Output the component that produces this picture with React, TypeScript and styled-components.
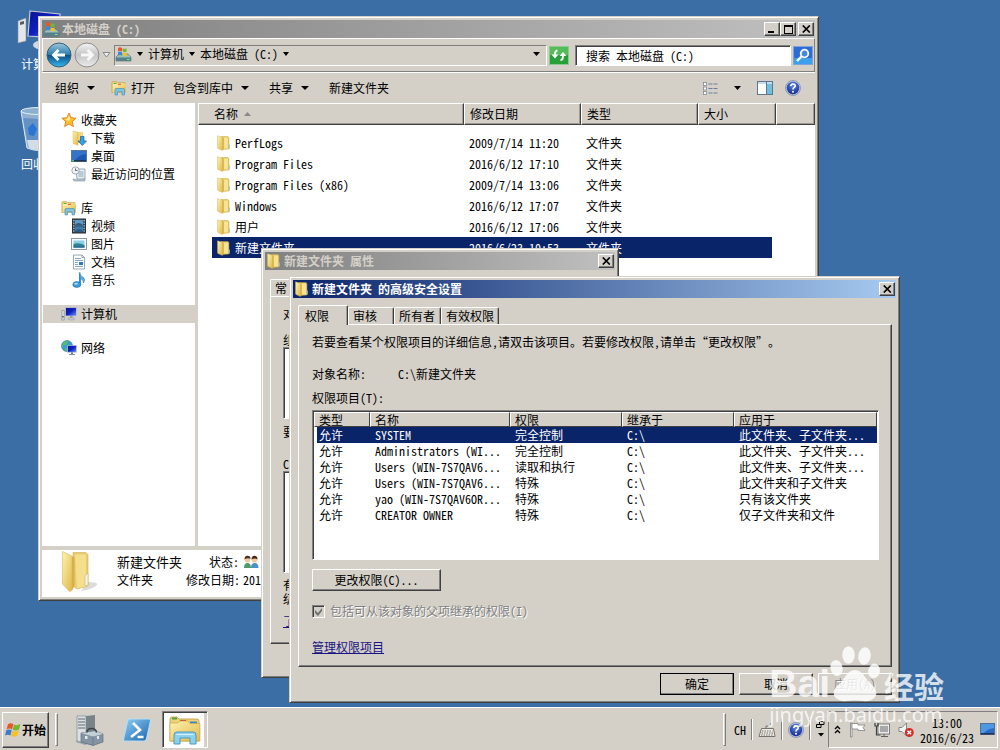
import React from 'react';
import styled, { createGlobalStyle, css } from 'styled-components';

const face = '#d4d0c8';
const navy = '#0a246a';

const GlobalStyle = createGlobalStyle`
  * { box-sizing: border-box; }
  html, body, #root { height: 100%; }
  body {
    margin: 0;
    overflow: hidden;
    background: #3a6ea5;
    color: #000;
  }
  body, button, input {
    font-family: 'Noto Sans CJK SC', 'Liberation Sans', sans-serif;
    font-size: 12px;
    line-height: 16px;
    font-feature-settings: 'hwid';
  }
  button { color: inherit; padding: 0; border: 0; background: none; text-align: left; white-space: nowrap; }
  p, h1, h2, ul { margin: 0; padding: 0; font-weight: normal; list-style: none; }
  svg { display: block; flex: none; }
`;

const raised = css`
  background: ${face};
  border: 1px solid;
  border-color: #fff #404040 #404040 #fff;
  box-shadow: inset -1px -1px #808080;
`;

const sunken = css`
  border: 1px solid;
  border-color: #808080 #fff #fff #808080;
  box-shadow: inset 1px 1px #404040;
`;

const Screen = styled.div`
  display: flex;
  flex-direction: column;
  height: 100vh;
  min-height: 100%;
`;

const Desktop = styled.main`
  position: relative;
  flex: 1;
  overflow: hidden;
`;

/* ---------- windows ---------- */

const Window = styled.section<{ $x: number; $y: number; $w: number; $h: number }>`
  position: absolute;
  left: ${p => p.$x}px;
  top: ${p => p.$y}px;
  width: ${p => p.$w}px;
  height: ${p => p.$h}px;
  display: flex;
  flex-direction: column;
  padding: 3px;
  background: ${face};
  border: 1px solid;
  border-color: ${face} #404040 #404040 ${face};
  box-shadow: inset 1px 1px #fff, inset -1px -1px #808080;
`;

const TitleBar = styled.header<{ $active?: boolean }>`
  display: flex;
  align-items: center;
  gap: 2px;
  height: 18px;
  flex: none;
  padding: 0 1px;
  color: ${p => (p.$active ? '#fff' : face)};
  background: ${p => (p.$active ? `linear-gradient(90deg, ${navy}, #a6caf0)` : 'linear-gradient(90deg, #808080, #c0c0c0)')};
`;

const TitleText = styled.h1`
  flex: 1;
  font-size: 12px;
  line-height: 16px;
  font-weight: bold;
  white-space: nowrap;
`;

const CaptionButton = styled.button`
  ${raised}
  display: flex;
  align-items: center;
  justify-content: center;
  width: 16px;
  height: 14px;
  color: #000;
`;

const CaptionGroup = styled.div`
  display: flex;
`;

/* ---------- desktop shortcuts ---------- */

const Shortcut = styled.button<{ $y: number }>`
  position: absolute;
  left: 14px;
  top: ${p => p.$y}px;
  display: flex;
  flex-direction: column;
  align-items: center;
  gap: 4px;
  width: 50px;
  color: #fff;
`;

/* ---------- explorer ---------- */

const AddressRow = styled.nav`
  display: flex;
  align-items: center;
  height: 34px;
  flex: none;
  gap: 2px;
  padding: 0 1px 0 3px;
  border: 1px solid;
  border-color: #fff #808080 #808080 #fff;
`;

const RoundButton = styled.button`
  width: 26px;
  height: 26px;
`;

const AddressBox = styled.div`
  display: flex;
  align-items: center;
  flex: 1;
  gap: 5px;
  height: 21px;
  padding: 0 6px 2px 0;
  margin-left: 1px;
  border: 1px solid;
  border-color: #808080 #fff #fff #808080;
`;

const Spacer = styled.span`
  flex: 1;
`;

const SearchInput = styled.input`
  ${sunken}
  width: 216px;
  height: 21px;
  margin-left: 4px;
  padding: 0 10px;
  background: #fff;
`;

const IconButton = styled.button`
  display: flex;
  align-items: center;
  justify-content: center;
  height: 20px;
`;

const Toolbar = styled.div`
  display: flex;
  align-items: center;
  height: 31px;
  flex: none;
  padding: 0 14px 0 13px;
  border-top: 1px solid #fff;
`;

const ToolButton = styled.button<{ $gap?: number; $tight?: boolean }>`
  display: flex;
  align-items: center;
  gap: ${p => (p.$tight ? 4 : 8)}px;
  height: 22px;
  margin-right: ${p => p.$gap ?? 16}px;
`;

const Body = styled.div`
  display: flex;
  flex: 1;
  min-height: 0;
`;

const SideBar = styled.aside`
  width: 156px;
  flex: none;
  padding-top: 8px;
  background: #fff;
  border-right: 3px solid ${face};
`;

const SideGroup = styled.ul`
  margin-bottom: 16px;
`;

const SideItem = styled.li<{ $nested?: boolean; $current?: boolean }>`
  display: flex;
  align-items: center;
  gap: 4px;
  height: 18px;
  margin-left: 1px;
  padding-left: ${p => (p.$nested ? 28 : 18)}px;
  background: ${p => (p.$current ? face : 'transparent')};
`;

const FilePane = styled.div`
  flex: 1;
  background: #fff;
  min-width: 0;
`;

const Table = styled.table`
  width: 100%;
  table-layout: fixed;
  border-collapse: separate;
  border-spacing: 0;
  text-align: left;
`;

const FileHead = styled.th`
  height: 22px;
  padding: 0 0 0 5px;
  font-weight: normal;
  background: ${face};
  border: 1px solid;
  border-color: #fff #404040 #404040 #fff;
  box-shadow: inset -1px -1px #a09c94;
  &:first-child { padding-left: 15px; }
`;

const HeadInner = styled.span`
  display: flex;
  align-items: center;
  gap: 6px;
`;

const FileBody = styled.tbody`
  &::before { content: ''; display: block; height: 7px; }
`;

const FileCell = styled.td`
  padding: 0;
  &:first-child { padding-left: 14px; }
  &:nth-child(4) { padding-right: 4px; }
`;

const FileCellInner = styled.div<{ $selected?: boolean }>`
  display: flex;
  align-items: center;
  gap: 3px;
  height: 21px;
  padding-left: 5px;
  white-space: nowrap;
  color: ${p => (p.$selected ? '#fff' : '#000')};
  background: ${p => (p.$selected ? navy : 'transparent')};
`;

const FileNameInner = styled(FileCellInner)`
  padding-left: 4px;
`;

const Details = styled.footer`
  display: flex;
  height: 51px;
  flex: none;
  padding-left: 19px;
  background: #fff;
  border-top: 4px solid ${face};
`;

const DetailsGrid = styled.dl`
  display: grid;
  grid-template-columns: 65px 53px auto;
  grid-auto-rows: 18px;
  column-gap: 4px;
  margin: 3px 0 0 12px;
  align-items: center;
  dt { text-align: right; white-space: nowrap; }
  dt:first-child, dt:nth-child(4) { text-align: left; }
  dd { margin: 0; white-space: nowrap; }
`;

const DetailsName = styled.dt`
  font-size: 13px;
`;

/* ---------- dialogs ---------- */

const Sheet = styled.div`
  display: flex;
  flex-direction: column;
  flex: 1;
  padding: 6px 4px 0 5px;
`;

const TabStrip = styled.div`
  display: flex;
  align-items: flex-end;
  height: 20px;
  flex: none;
`;

const Tab = styled.button<{ $selected?: boolean; $w: number }>`
  width: ${p => p.$w}px;
  height: ${p => (p.$selected ? 20 : 17)}px;
  padding: 0 0 0 ${p => (p.$selected ? 6 : 4)}px;
  margin-bottom: ${p => (p.$selected ? -1 : 0)}px;
  position: relative;
  background: ${face};
  border: 1px solid;
  border-bottom: 0;
  border-color: #fff #404040 #fff #fff;
  border-radius: 2px 2px 0 0;
  box-shadow: inset -1px 0 #a09c94;
`;

const Panel = styled.div`
  display: flex;
  flex-direction: column;
  flex: 1;
  padding: 9px 12px 0 13px;
  border: 1px solid;
  border-color: #fff #404040 #404040 #fff;
  box-shadow: inset -1px -1px #808080;
`;

const ObjectRow = styled.dl`
  display: flex;
  margin: 16px 0 8px;
  dt { width: 86px; }
  dd { margin: 0; }
`;

const ListBox = styled.div`
  ${sunken}
  height: 150px;
  margin-top: 4px;
  padding: 1px;
  background: #fff;
`;

const AclHead = styled.th`
  height: 15px;
  padding: 0 0 0 4px;
  font-weight: normal;
  line-height: 13px;
  background: ${face};
  border: 1px solid;
  border-color: #fff #404040 #404040 #fff;
`;

const AclCell = styled.td`
  padding: 0;
  &:first-child { padding-left: 3px; }
`;

const AclInner = styled.div<{ $selected?: boolean }>`
  height: 16px;
  padding-left: 5px;
  white-space: nowrap;
  color: ${p => (p.$selected ? '#fff' : '#000')};
  background: ${p => (p.$selected ? navy : 'transparent')};
`;

const AclFirst = styled(AclInner)`
  padding-left: 2px;
`;

const PushButton = styled.button<{ $w: number; $default?: boolean }>`
  ${raised}
  width: ${p => p.$w}px;
  height: 22px;
  text-align: center;
  outline: ${p => (p.$default ? '1px solid #000' : 'none')};
  outline-offset: -1px;
  &:disabled { color: #808080; text-shadow: 1px 1px #fff; }
`;

const EditButton = styled(PushButton)`
  margin-top: 9px;
`;

const InheritLabel = styled.label`
  display: flex;
  align-items: center;
  gap: 5px;
  margin-top: 12px;
  color: #808080;
  text-shadow: 1px 1px #fff;
`;

const CheckBox = styled.input`
  appearance: none;
  width: 13px;
  height: 13px;
  margin: 0;
  ${sunken}
  background: ${face}
    url("data:image/svg+xml,%3Csvg xmlns='http://www.w3.org/2000/svg' width='11' height='11'%3E%3Cpath d='M2 4l3 3 4-5v3l-4 5-3-3z' fill='%23707070'/%3E%3C/svg%3E")
    center no-repeat;
`;

const Link = styled.a`
  color: #1a1480;
  text-decoration: underline;
`;

const ManageRow = styled.p`
  margin-top: 20px;
`;

const DialogButtons = styled.div`
  display: flex;
  justify-content: flex-end;
  gap: 5px;
  padding: 6px 0 4px;
`;

const BackPanel = styled(Panel)`
  padding: 10px 12px 0 12px;
  margin-bottom: 30px;
  white-space: nowrap;
  overflow: hidden;
`;

const BackList = styled.div<{ $h: number }>`
  ${sunken}
  height: ${p => p.$h}px;
  flex: none;
  background: #fff;
`;

const BackText = styled.p<{ $top: number }>`
  margin-top: ${p => p.$top}px;
  line-height: 14px;
`;

/* ---------- taskbar ---------- */

const TaskBar = styled.footer`
  display: flex;
  align-items: center;
  height: 43px;
  flex: none;
  padding: 1px 2px 0;
  background: ${face};
  border-top: 1px solid #fff;
`;

const StartButton = styled.button`
  ${raised}
  display: flex;
  align-items: center;
  gap: 1px;
  width: 47px;
  height: 36px;
  padding-left: 2px;
  font-weight: bold;
`;

const Grip = styled.span`
  width: 3px;
  height: 33px;
  margin: 0 8px 0 6px;
  border: 1px solid;
  border-color: #fff #808080 #808080 #fff;
`;

const TaskButton = styled.button<{ $open?: boolean }>`
  display: flex;
  align-items: center;
  justify-content: center;
  width: 46px;
  height: 37px;
  margin-right: 2px;
  ${p => p.$open && css`${sunken} background: #fff; box-shadow: inset 1px 1px #404040, inset -3px 0 ${face};`}
`;

const Separator = styled.span`
  width: 2px;
  height: 21px;
  border-left: 1px solid #808080;
  border-right: 1px solid #fff;
`;

const LangBar = styled.div`
  display: flex;
  align-items: center;
  gap: 5px;
  margin-right: 3px;
`;

const LangGrip = styled(Grip)`
  margin: 0 3px 0 0;
`;

const Tray = styled.div`
  display: flex;
  align-items: center;
  gap: 5px;
  height: 37px;
  padding: 0 2px 0 5px;
  border: 1px solid;
  border-color: #808080 #fff #fff #808080;
`;

const TrayIcons = styled.div`
  display: flex;
  align-items: center;
  gap: 8px;
`;

const Clock = styled.time`
  width: 56px;
  line-height: 15px;
  text-align: center;
`;

/* ---------- watermark ---------- */

const Watermark = styled.div`
  position: absolute;
  right: 56px;
  bottom: 23px;
  color: rgba(255, 255, 255, 0.8);
  pointer-events: none;
  font-feature-settings: normal;
`;

const Brand = styled.div`
  display: flex;
  align-items: flex-end;
  height: 60px;
`;

const BrandLatin = styled.span`
  font: bold 39px/40px 'Liberation Sans', sans-serif;
  margin-bottom: -1px;
`;

const BrandHan = styled.span`
  font-size: 30px;
  line-height: 36px;
  font-weight: bold;
  margin-left: 4px;
`;

const BrandUrl = styled.div`
  font: 20px/24px 'Noto Sans', sans-serif;
`;

/* ---------- drawings ---------- */

const HiddenDefs = styled.svg`
  position: absolute;
`;

const Gradients = () => (
  <HiddenDefs width="0" height="0" aria-hidden="true">
    <defs>
      <linearGradient id="gold" x1="0" y1="0" x2="1" y2="1">
        <stop offset="0" stopColor="#fdf3b0" /><stop offset="1" stopColor="#e0b84c" />
      </linearGradient>
      <linearGradient id="nav" x1="0" y1="0" x2="0" y2="1">
        <stop offset="0" stopColor="#9cc8dc" /><stop offset=".48" stopColor="#2a7eb0" /><stop offset=".5" stopColor="#0a4d86" /><stop offset="1" stopColor="#36b8ec" />
      </linearGradient>
      <linearGradient id="navOff" x1="0" y1="0" x2="0" y2="1">
        <stop offset="0" stopColor="#f4f4f4" /><stop offset=".5" stopColor="#c4c4c4" /><stop offset="1" stopColor="#ececec" />
      </linearGradient>
      <linearGradient id="screen" x1="0" y1="0" x2="1" y2="1">
        <stop offset="0" stopColor="#0a1490" /><stop offset=".5" stopColor="#1020c0" /><stop offset="1" stopColor="#6c9cf4" />
      </linearGradient>
      <linearGradient id="sky" x1="0" y1="0" x2="1" y2="1">
        <stop offset="0" stopColor="#8fd0f4" /><stop offset="1" stopColor="#1c62ac" />
      </linearGradient>
      <radialGradient id="help" cx=".5" cy=".3" r=".8">
        <stop offset="0" stopColor="#5c88e4" /><stop offset="1" stopColor="#0c1c84" />
      </radialGradient>
    </defs>
  </HiddenDefs>
);

const FolderIcon = () => (
  <svg width="16" height="16" viewBox="0 0 16 16">
    <path d="M5 1.500h7l1 1V14l-6 .500L5 13z" fill="#e4c45c" stroke="#c8a440" strokeWidth=".4" />
    <path d="M7.500 2.500h4.500v11H7.500z" fill="#f6e494" />
    <path d="M1.500.800 6.500 2.200V15.600L2 13.600 1.500 13z" fill="url(#gold)" stroke="#d0ac48" strokeWidth=".4" />
    <path d="M6.500 2.200 7.800 3v11l-1.300 1.600z" fill="#d9b24a" />
    <path d="M12.800 9.500h1v4h-1z" fill="#9cc4cc" />
  </svg>
);

const BigFolder = () => (
  <svg width="44" height="46" viewBox="0 0 44 46">
    <path d="M26 32q12 0 10 3-4 4-16 6z" fill="#000" opacity=".14" />
    <path d="M12 2.500h13l2 2V36l-11 3-4-3z" fill="#e8cc74" stroke="#d0ac50" strokeWidth=".6" />
    <path d="M14 4.500h11V24l2 2v10l-11 2.500z" fill="#f4e08c" />
    <path d="M1.500 1.500 11 6v34.500L8.500 41.500 1.500 34z" fill="url(#gold)" stroke="#d8b858" strokeWidth=".6" />
    <path d="M11 6l2.500 2v28L11 40.500z" fill="#d8b048" />
    <path d="M24 26l3-3v12l-3 1z" fill="#f4f4e8" stroke="#c0a860" strokeWidth=".5" />
  </svg>
);

const DriveIcon = () => (
  <svg width="17" height="17" viewBox="0 0 17 17">
    <path d="M1 11l3-3h9l3 3v4H1z" fill="#9ac0bc" stroke="#4c6c74" strokeWidth=".6" />
    <path d="M1 11.500h15v3.500H1z" fill="#55808c" /><path d="M12 13h2.500v1H12z" fill="#7cf060" />
    <path d="M3 2q2-1.500 4 0v3.400q-2-1.200-4 0z" fill="#e8542c" /><path d="M7.600 2.200q2 1.200 4 0v3.400q-2 1.200-4 0z" fill="#74b830" />
    <path d="M3 6.200q2-1.200 4 0v3.400q-2-1.200-4 0z" fill="#3c88d8" /><path d="M7.600 6.400q2 1.200 4 0v3.400q-2 1.200-4 0z" fill="#f8c020" />
  </svg>
);

const ArrowIcon = ({ off }: { off?: boolean }) => (
  <svg width="26" height="26" viewBox="0 0 26 26">
    <circle cx="13" cy="13" r="12" fill={off ? 'url(#navOff)' : 'url(#nav)'} stroke={off ? '#8c8c8c' : '#3c5c74'} />
    <path transform={off ? 'rotate(180 13 13)' : undefined} d="M19 13H8M12.500 8 7.500 13l5 5" fill="none" stroke={off ? '#f8f8f8' : '#fff'} strokeWidth="2.800" />
  </svg>
);

const Caret = ({ w = 7 }: { w?: number }) => (
  <svg width={w} height="4" viewBox="0 0 8 4" preserveAspectRatio="none"><path d="M0 0h8L4 4z" fill="#000" /></svg>
);

const HollowCaret = () => (
  <svg width="9" height="6" viewBox="0 0 9 6"><path d="M1 .500h7L4.500 5z" fill="#eee" stroke="#888" /></svg>
);

const RefreshIcon = () => (
  <svg width="20" height="19" viewBox="0 0 20 19">
    <rect x=".5" y=".5" width="19" height="18" fill="#28a038" stroke="#8cc890" />
    <path d="M1 1h18v8H1z" fill="#54bc58" />
    <path d="M8.500 4.500Q6 4.500 6 9M11.500 14Q14 14 14 9.500" fill="none" stroke="#fff" strokeWidth="2" />
    <path d="M2.500 8.500h7L6 12.500zM10.500 10h7L14 6z" fill="#fff" />
  </svg>
);

const SearchIcon = () => (
  <svg width="20" height="19" viewBox="0 0 20 19">
    <rect x=".5" y=".5" width="19" height="18" fill="#2c6cd4" stroke="#7ca4dc" /><path d="M1 12h18v6H1z" fill="#3ca0ec" />
    <circle cx="11.500" cy="7.500" r="3.800" fill="#4888dc" stroke="#fff" strokeWidth="1.800" /><path d="M8.500 10.500 4 15" stroke="#fff" strokeWidth="2.400" />
  </svg>
);

const LibraryIcon = () => (
  <svg width="16" height="16" viewBox="0 0 16 16">
    <path d="M.800 2.500 1.500 1.500h4l1 1h7.500v10H.800z" fill="#ecd078" stroke="#b89840" strokeWidth=".5" />
    <path d="M2 3.500h11.500l1.500 1v8H2z" fill="url(#gold)" />
    <path d="M2.500 3h3v1h-3z" fill="#58b048" /><path d="M7 3.800h3v1H7z" fill="#d05838" />
    <path d="M4 15V9.500q0-1 1-1h7.500q1 0 1 1V15h-2.500v-3.200H6.500V15z" fill="#7cc4e4" stroke="#3c88b4" strokeWidth=".6" />
  </svg>
);

const StarIcon = () => (
  <svg width="16" height="16" viewBox="0 0 16 16"><path d="M8 1l2.100 4.700 5 .500-3.800 3.400 1.100 5L8 12l-4.400 2.600 1.100-5L.900 6.200l5-.500z" fill="#fbc02c" stroke="#d8701c" strokeWidth=".8" /><path d="M8 3l1.300 3.400L8 9 4.500 7.200 6.700 6.500z" fill="#fde890" /></svg>
);

const DownloadIcon = () => (
  <svg width="16" height="16" viewBox="0 0 16 16">
    <path d="M5 2h7v11H5z" fill="#f0d880" /><path d="M2 1l5 1.200v13L2 13.400z" fill="url(#gold)" stroke="#d0ac48" strokeWidth=".4" />
    <path d="M9.500 6.500h3.500V11h2.500l-4.200 4.500L7 11h2.500z" fill="#38a0dc" stroke="#14609c" strokeWidth=".7" />
  </svg>
);

const DesktopIcon = () => (
  <svg width="16" height="16" viewBox="0 0 16 16"><rect x=".5" y="2.500" width="15" height="11" fill="#2058b0" stroke="#5c7890" /><path d="M1 3h14v3Q8 7 4 12H1z" fill="#3474c8" /><path d="M1 12h14v1.500H1z" fill="#1c3460" /><path d="M1 12h2v1.500H1z" fill="#58c070" /></svg>
);

const RecentIcon = () => (
  <svg width="16" height="16" viewBox="0 0 16 16"><path d="M5 3h9v10H6z" fill="#e4eef4" stroke="#8898a4" strokeWidth=".8" /><path d="M2 13q8 2 12-.500V15H3z" fill="#b8c8d4" stroke="#8090a0" strokeWidth=".6" /><path d="M7.500 6h5M7.500 8h5M7.500 10h5" stroke="#7c94a8" strokeWidth=".8" /><circle cx="4.500" cy="4.500" r="3.700" fill="#eef2f4" stroke="#8c98a0" strokeWidth=".8" /><path d="M4.500 2.500v2h2" fill="none" stroke="#444" strokeWidth=".8" /></svg>
);

const VideoIcon = () => (
  <svg width="16" height="16" viewBox="0 0 16 16"><rect x="1.500" y="1" width="13" height="14" fill="#3c4850" stroke="#283038" /><path d="M4 2h8v5.500H4z" fill="#5c9cc4" /><path d="M4 8.500h8V14H4z" fill="#3c7cb0" /><path d="M4 7q3-4 8 0v.500H4zM4 13q4-4 8 0v1H4z" fill="#285c88" /><path d="M2.800 2v13M13.200 2v13" stroke="#d4dce0" strokeWidth="1" strokeDasharray="1.300 1.300" /></svg>
);

const PictureIcon = () => (
  <svg width="16" height="16" viewBox="0 0 16 16"><rect x=".5" y="2.500" width="15" height="11" fill="#f8fafa" stroke="#8c9ca4" /><path d="M2.500 4.500h11v7h-11z" fill="#8cd0e8" /><path d="M2.500 8q5-2 11 1v2.500h-11z" fill="#2c8494" /><path d="M2.500 10.500h11v1h-11z" fill="#2c5890" /></svg>
);

const DocIcon = () => (
  <svg width="16" height="16" viewBox="0 0 16 16"><path d="M2.500 1h8.500l2.500 2.500V15h-11z" fill="#fbfcfc" stroke="#84949c" strokeWidth=".8" /><path d="M11 1v2.500h2.500" fill="none" stroke="#84949c" strokeWidth=".8" /><path d="M4 4.500h6M4 6.500h8M4 8.500h3M4 10.500h3M4 12.500h8" stroke="#7c9cb4" strokeWidth=".9" /><path d="M8 8h4v3H8z" fill="#2c78b8" /></svg>
);

const MusicIcon = () => (
  <svg width="16" height="16" viewBox="0 0 16 16"><path d="M8 .500q1 3.500 4.500 5Q14.500 7.500 12.500 11 13 8 9.500 6.500V12.500" fill="#58b4e8" stroke="#2070b0" strokeWidth=".6" /><path d="M8 .500h1.500V13H8z" fill="#2c8ccc" /><ellipse cx="5.800" cy="12.500" rx="4" ry="2.900" fill="#3c9cdc" stroke="#1c68a8" strokeWidth=".6" /><ellipse cx="5" cy="11.700" rx="1.800" ry="1" fill="#a4dcf4" /></svg>
);

const ComputerIcon = () => (
  <svg width="16" height="16" viewBox="0 0 16 16"><path d="M.800 4.500h2.500V14H.800z" fill="#d8dcdc" stroke="#808484" strokeWidth=".6" /><path d="M1.300 10h1.200v1.500H1.300z" fill="#333" /><path d="M4.500 1.500h11v8.500h-11z" fill="url(#screen)" stroke="#c4ccd4" strokeWidth=".8" /><path d="M9 10.300h2.500V12H9z" fill="#889" /><ellipse cx="10.300" cy="12.800" rx="3.600" ry="1.200" fill="#c8ccd0" stroke="#8890a0" strokeWidth=".5" /></svg>
);

const NetworkIcon = () => (
  <svg width="16" height="16" viewBox="0 0 16 16"><circle cx="6" cy="6" r="5.500" fill="#3c9cd4" stroke="#2870a0" strokeWidth=".6" /><path d="M2 3q3-3 5-1.500L5.500 4.500 3 5.500 1 8zM4 8l3 .500-1 3-2-1z" fill="#58c060" /><path d="M6.500 5.500h9v6.800h-9z" fill="url(#screen)" stroke="#c0c8d8" strokeWidth=".7" /><path d="M10 12.500h2V14h-2z" fill="#778" /><path d="M8 14h6v1H8z" fill="#8890a8" /></svg>
);

const ViewIcon = () => (
  <svg width="15" height="13" viewBox="0 0 15 13">{[0, 4.5, 9].map(y => (<g key={y}><rect x=".5" y={y + 0.5} width="3" height="3" fill="#fff" stroke="#808890" strokeWidth=".8" /><path d={`M5.500 ${y + 2}h9`} stroke="#68809c" strokeWidth="1" strokeDasharray="4 1" /></g>))}</svg>
);

const PreviewIcon = () => (
  <svg width="16" height="14" viewBox="0 0 16 14"><rect x=".5" y=".5" width="15" height="13" fill="#fff" stroke="#5c7890" /><path d="M1 1h14v2H1z" fill="#c4dcec" /><path d="M10 3h5v10h-5z" fill="#70c0dc" /><path d="M9.500 1v12" stroke="#5c7890" /></svg>
);

const HelpIcon = () => (
  <svg width="16" height="16" viewBox="0 0 16 16"><circle cx="8" cy="8" r="7.500" fill="#b8c4dc" stroke="#7884a4" strokeWidth=".7" /><circle cx="8" cy="8" r="6.200" fill="url(#help)" /><path d="M5.700 6.200Q6 3.900 8.100 4q2.300.200 2.100 2-.200 1-1.300 1.700Q8 8.300 8 9.500" fill="none" stroke="#fff" strokeWidth="1.600" /><circle cx="8" cy="11.800" r="1" fill="#fff" /></svg>
);

const PeopleIcon = () => (
  <svg width="16" height="14" viewBox="0 0 16 14"><path d="M1 13q0-5 3.500-5T8 13z" fill="#4c9c6c" /><path d="M8 13q0-5 3.700-5T15.500 13z" fill="#4c90c4" /><circle cx="4.500" cy="4.800" r="2.800" fill="#f0c8a0" /><circle cx="11.500" cy="4.800" r="2.800" fill="#f0c8a0" /><path d="M1.500 4.500Q1.500.800 4.500.800t3 3Q4 2.500 1.500 4.500zM8.500 4.500Q8.500.800 11.500.800t3 3.700Q12 2.500 8.500 4.500z" fill="#4c2c18" /></svg>
);

const CloseGlyph = () => (
  <svg width="9" height="8" viewBox="0 0 9 8"><path d="M.800.500l7 7M7.800.500l-7 7" stroke="#000" strokeWidth="1.700" /></svg>
);

const WindowsFlag = () => (
  <svg width="16" height="16" viewBox="0 0 16 16"><path d="M3 2.200q2.800-1.800 5.400 0L7 7.400q-2.600-1.600-5.400 0z" fill="#e8542c" /><path d="M9 2.600q2.900 1.500 6.400-.500l-1.300 5.400q-3.200 1.800-6.400.300z" fill="#74b830" /><path d="M1.300 8.300q2.700-1.700 5.400 0l-1.300 5.300Q2.800 11.900.100 13.500z" fill="#3c78d0" /><path d="M7.300 8.800q3 1.500 6.400-.400l-1.400 5.400q-3.200 1.700-6.300.300z" fill="#f8c020" /></svg>
);

const ServerIcon = () => (
  <svg width="30" height="32" viewBox="0 0 30 32">
    <path d="M3 2h9v26H3z" fill="#dce0e2" stroke="#707a80" strokeWidth=".6" /><path d="M12 2l9-1v24l-9 3z" fill="#78838a" />
    <path d="M4 5h7M4 8h7M4 11h7M4 14h7" stroke="#606a72" strokeWidth="1.200" /><path d="M2 26l9 3 4-2v2l-4 2-9-3z" fill="#98a4ac" />
    <path d="M7 19l15-2 7 3v8l-10 3.500L7 28z" fill="#8494a4" stroke="#56636e" strokeWidth=".6" /><path d="M7 19l12 3.500 10-2.500-7-3z" fill="#c4d0d8" /><path d="M19 22.500v9" stroke="#5c6c78" strokeWidth=".6" />
    <path d="M13 18.500q0-4 4.500-4t5 4" fill="none" stroke="#3c444c" strokeWidth="1.500" /><path d="M11 22h2.500v3H11zM23 22h2v3h-2z" fill="#e4e8ea" />
  </svg>
);

const ShellIcon = () => (
  <svg width="30" height="26" viewBox="0 0 30 26"><path d="M7.500 2H27q2 0 1.500 2l-4 18q-.500 2-2.500 2H3q-2 0-1.500-2l4-18Q6 2 7.500 2z" fill="url(#sky)" stroke="#b4dcf4" strokeWidth="1.200" /><path d="M11 6l7 7-9 7M15.500 20h6" fill="none" stroke="#fff" strokeWidth="2.600" /></svg>
);

const ExplorerIcon = () => (
  <svg width="34" height="32" viewBox="0 0 34 32">
    <path d="M2 5q0-2 2-2h5l2 2h18q2 0 2 2v20H2z" fill="#ecd27c" stroke="#bc9838" strokeWidth=".8" /><path d="M4 3.500h5v2H4z" fill="#4ca444" /><path d="M12 6h6v2h-6z" fill="#cc4c30" /><path d="M22 7.500h7v2h-7z" fill="#3c84c4" />
    <path d="M2 9h8l2-2h8l2 2.500h10V27H2z" fill="url(#gold)" stroke="#c8a040" strokeWidth=".6" />
    <path d="M6 30V21q0-3 3-3h16q3 0 3 3v9h-6v-6H12v6z" fill="#8cd0ec" stroke="#4c98c4" /><path d="M8 21q0-1 2-1h14q2 0 2 1z" fill="#d8f2fc" />
  </svg>
);

const KeyboardIcon = () => (
  <svg width="18" height="16" viewBox="0 0 18 16"><path d="M3.500 6.500h12l1.500 8H1z" fill="#ecebe6" stroke="#77736c" /><path d="M4 9h10.500M3.500 11h11.500M3 13h12" stroke="#77736c" strokeDasharray="1.500 1" /><path d="M8 6V4q5 1 5-3" fill="none" stroke="#77736c" /></svg>
);

const RestoreIcon = () => (
  <svg width="9" height="17" viewBox="0 0 9 17"><path d="M3.500.500H8v3H3.500zM.500 3.500H5v3H.500z" fill="#d4d0c8" stroke="#000" /><path d="M2 12h6l-3 3.500z" fill="#000" /></svg>
);

const ChevronsIcon = () => (
  <svg width="7" height="9" viewBox="0 0 7 9"><path d="M1 4l2.500-2.500L6 4M1 8l2.500-2.500L6 8" fill="none" stroke="#000" strokeWidth="1.300" /></svg>
);

const FlagIcon = () => (
  <svg width="17" height="16" viewBox="0 0 17 16"><path d="M1.500 1h1.500v14H1.500z" fill="#fff" stroke="#707070" strokeWidth=".7" /><path d="M3 1.500h6v1.500h7l-2 2.500 2 3H9V7H3z" fill="#fff" stroke="#808080" strokeWidth=".8" /></svg>
);

const NetTrayIcon = () => (
  <svg width="16" height="16" viewBox="0 0 16 16"><rect x="5" y="3" width="10" height="8" fill="#a8a8a8" stroke="#fff" strokeWidth="1.500" /><rect x="4" y="2" width="11.600" height="10" fill="none" stroke="#606060" strokeWidth=".8" /><path d="M7 14.500h7M10 12v2" stroke="#606060" /><path d="M1 1v3h3V1M2.500 4.500V13h4" fill="none" stroke="#404040" strokeWidth="1.200" /></svg>
);

const SpeakerIcon = () => (
  <svg width="16" height="16" viewBox="0 0 16 16"><path d="M1 5.500h3L8.500 1v13L4 9.500H1z" fill="#f4f4f4" stroke="#707070" strokeWidth=".8" /><circle cx="11.300" cy="10.500" r="4.500" fill="#d03028" /><path d="M9.500 8.700l3.600 3.600M13.100 8.700l-3.600 3.600" stroke="#fff" strokeWidth="1.400" /></svg>
);

const PeekIcon = () => (
  <svg width="15" height="13" viewBox="0 0 15 13"><rect x=".5" y=".5" width="14" height="11" fill="#2c6cc0" stroke="#54708c" /><path d="M1 1h13v4Q7 6 4 10H1z" fill="#4c98e4" /><path d="M1 10h13v1.500H1z" fill="#1c3460" /></svg>
);

const BigComputer = () => (
  <svg width="46" height="42" viewBox="0 0 46 42"><path d="M2 11l8-3v23l-8 2z" fill="#e4e6e8" stroke="#8c9094" strokeWidth=".6" /><path d="M4 12l4-1v3l-4 1z" fill="#585c60" /><path d="M14 1l30 3v24l-32-2z" fill="url(#screen)" stroke="#c8ccd4" strokeWidth="1.200" /><ellipse cx="28" cy="35" rx="11" ry="5" fill="#d4d8e0" /><path d="M24 28h8v6h-8z" fill="#b0b4bc" /></svg>
);

const BigBin = () => (
  <svg width="42" height="46" viewBox="0 0 42 46"><path d="M3 5h36l-6 37q-12 5-24 0z" fill="#b4cce0" fillOpacity=".7" stroke="#dce8f4" /><path d="M5 12l32 2-5 20H9z" fill="#2464b4" opacity=".4" /><path d="M10 22l5-5 4 6-3 7-5-1z" fill="#2c74d4" /><path d="M9 34h24l-2 8q-10 4-20 0z" fill="#e4e8ec" opacity=".8" /><ellipse cx="21" cy="5" rx="18" ry="3.500" fill="#8cb0d0" stroke="#e4eef8" /></svg>
);

const Paw = () => (
  <svg width="50" height="58" viewBox="0 0 50 58">
    <g fill="#fff" fillOpacity=".82">
      <ellipse cx="6.500" cy="23" rx="6" ry="8" transform="rotate(-12 6.500 23)" /><ellipse cx="18.500" cy="10" rx="6.200" ry="8.800" />
      <ellipse cx="34.500" cy="11" rx="6.200" ry="8.800" transform="rotate(8 34.500 11)" /><ellipse cx="44" cy="26" rx="5.800" ry="7.500" transform="rotate(12 44 26)" />
      <path d="M25 25q6 0 10 7 5 6 9 10 4 6 1 10-4 5-12 4-8-1.500-16 0-8 1-12-4-3-5 1-10 5-4 9-10 4-7 10-7z" />
    </g>
  </svg>
);

/* ---------- data ---------- */

const files = [
  ['PerfLogs', '2009/7/14 11:20'],
  ['Program Files', '2016/6/12 17:10'],
  ['Program Files (x86)', '2009/7/14 13:06'],
  ['Windows', '2016/6/12 17:07'],
  ['用户', '2016/6/12 17:06'],
  ['新建文件夹', '2016/6/23 10:53'],
];

const entries = [
  ['SYSTEM', '完全控制', '此文件夹、子文件夹...'],
  ['Administrators (WI...', '完全控制', '此文件夹、子文件夹...'],
  ['Users (WIN-7S7QAV6...', '读取和执行', '此文件夹、子文件夹...'],
  ['Users (WIN-7S7QAV6...', '特殊', '此文件夹和子文件夹'],
  ['yao (WIN-7S7QAV6OR...', '特殊', '只有该文件夹'],
  ['CREATOR OWNER', '特殊', '仅子文件夹和文件'],
];

const Explorer = () => (
  <Window $x={38} $y={16} $w={781} $h={585}>
    <TitleBar>
      <DriveIcon />
      <TitleText>本地磁盘 (C:)</TitleText>
      <CaptionGroup>
        <CaptionButton aria-label="最小化"><svg width="8" height="8"><path d="M0 6h6v2H0z" /></svg></CaptionButton>
        <CaptionButton aria-label="最大化"><svg width="9" height="9"><path d="M0 0h9v9H0zM1 2v6h7V2z" fillRule="evenodd" /></svg></CaptionButton>
      </CaptionGroup>
      <CaptionButton aria-label="关闭"><CloseGlyph /></CaptionButton>
    </TitleBar>
    <AddressRow>
      <RoundButton aria-label="后退"><ArrowIcon /></RoundButton>
      <RoundButton aria-label="前进"><ArrowIcon off /></RoundButton>
      <HollowCaret />
      <AddressBox>
        <DriveIcon />
        <Caret w={6} />
        <span>计算机</span>
        <Caret w={6} />
        <span>本地磁盘 (C:)</span>
        <Caret w={6} />
        <Spacer />
        <Caret />
      </AddressBox>
      <IconButton aria-label="刷新"><RefreshIcon /></IconButton>
      <SearchInput aria-label="搜索" defaultValue="搜索 本地磁盘 (C:)" />
      <IconButton aria-label="开始搜索"><SearchIcon /></IconButton>
    </AddressRow>
    <Toolbar>
      <ToolButton>组织 <Caret w={8} /></ToolButton>
      <ToolButton $gap={18} $tight><LibraryIcon />打开</ToolButton>
      <ToolButton $gap={20}>包含到库中 <Caret w={8} /></ToolButton>
      <ToolButton $gap={20}>共享 <Caret w={8} /></ToolButton>
      <ToolButton>新建文件夹</ToolButton>
      <Spacer />
      <ToolButton aria-label="更改视图"><ViewIcon /><span /><Caret /></ToolButton>
      <ToolButton aria-label="预览窗格" $gap={12}><PreviewIcon /></ToolButton>
      <ToolButton aria-label="帮助" $gap={0}><HelpIcon /></ToolButton>
    </Toolbar>
    <Body>
      <SideBar>
        <SideGroup>
          <SideItem><StarIcon />收藏夹</SideItem>
          <SideItem $nested><DownloadIcon />下载</SideItem>
          <SideItem $nested><DesktopIcon />桌面</SideItem>
          <SideItem $nested><RecentIcon />最近访问的位置</SideItem>
        </SideGroup>
        <SideGroup>
          <SideItem><LibraryIcon />库</SideItem>
          <SideItem $nested><VideoIcon />视频</SideItem>
          <SideItem $nested><PictureIcon />图片</SideItem>
          <SideItem $nested><DocIcon />文档</SideItem>
          <SideItem $nested><MusicIcon />音乐</SideItem>
        </SideGroup>
        <SideGroup><SideItem $current><ComputerIcon />计算机</SideItem></SideGroup>
        <SideGroup><SideItem><NetworkIcon />网络</SideItem></SideGroup>
      </SideBar>
      <FilePane>
        <Table>
          <colgroup><col width="266" /><col width="117" /><col width="117" /><col width="78" /><col /></colgroup>
          <thead>
            <tr>
              <FileHead><HeadInner>名称<svg width="7" height="4"><path d="M0 4h7L3.500 0z" fill="#888" /></svg></HeadInner></FileHead>
              <FileHead>修改日期</FileHead><FileHead>类型</FileHead><FileHead>大小</FileHead><FileHead />
            </tr>
          </thead>
          <FileBody>
            {files.map(([name, date], i) => {
              const on = i === 5;
              return (
                <tr key={name}>
                  <FileCell><FileNameInner $selected={on}><FolderIcon />{name}</FileNameInner></FileCell>
                  <FileCell><FileCellInner $selected={on}>{date}</FileCellInner></FileCell>
                  <FileCell><FileCellInner $selected={on}>文件夹</FileCellInner></FileCell>
                  <FileCell><FileCellInner $selected={on} /></FileCell>
                  <FileCell />
                </tr>
              );
            })}
          </FileBody>
        </Table>
      </FilePane>
    </Body>
    <Details>
      <BigFolder />
      <DetailsGrid>
        <DetailsName>新建文件夹</DetailsName><dt>状态:</dt><dd><PeopleIcon /></dd>
        <dt>文件夹</dt><dt>修改日期:</dt><dd>2016</dd>
      </DetailsGrid>
    </Details>
  </Window>
);

const Properties = () => (
  <Window $x={261} $y={248} $w={358} $h={430}>
    <TitleBar>
      <FolderIcon />
      <TitleText>新建文件夹 属性</TitleText>
      <CaptionButton aria-label="关闭"><CloseGlyph /></CaptionButton>
    </TitleBar>
    <Sheet>
      <TabStrip role="tablist">
        <Tab role="tab" $w={47}>常</Tab>
        <Tab role="tab" $w={47} aria-label="共享" />
        <Tab role="tab" $w={48} $selected aria-selected aria-label="安全" />
      </TabStrip>
      <BackPanel>
        <BackText $top={0}>对</BackText>
        <BackText $top={12}>组</BackText>
        <BackList $h={72} />
        <BackText $top={6}>要</BackText>
        <BackText $top={18}>C</BackText>
        <BackList $h={102} />
        <BackText $top={5}>有</BackText>
        <BackText $top={0}>级</BackText>
        <BackText $top={8}><Link href="#acl">了</Link></BackText>
      </BackPanel>
    </Sheet>
  </Window>
);

const Security = () => (
  <Window $x={289} $y={276} $w={611} $h={427}>
    <TitleBar $active>
      <FolderIcon />
      <TitleText>新建文件夹 的高级安全设置</TitleText>
      <CaptionButton aria-label="关闭"><CloseGlyph /></CaptionButton>
    </TitleBar>
    <Sheet>
      <TabStrip role="tablist">
        <Tab role="tab" $w={50} $selected aria-selected>权限</Tab>
        <Tab role="tab" $w={46}>审核</Tab>
        <Tab role="tab" $w={47}>所有者</Tab>
        <Tab role="tab" $w={58}>有效权限</Tab>
      </TabStrip>
      <Panel role="tabpanel">
        <p>若要查看某个权限项目的详细信息，请双击该项目。若要修改权限，请单击“更改权限”。</p>
        <ObjectRow><dt>对象名称:</dt><dd>C:\新建文件夹</dd></ObjectRow>
        <p id="acl-label">权限项目(T):</p>
        <ListBox>
          <Table aria-labelledby="acl-label">
            <colgroup><col width="56" /><col width="140" /><col width="112" /><col width="112" /><col /></colgroup>
            <thead>
              <tr>{['类型', '名称', '权限', '继承于', '应用于'].map(h => <AclHead key={h}>{h}</AclHead>)}</tr>
            </thead>
            <tbody>
              {entries.map(([name, perm, scope], i) => {
                const on = i === 0;
                return (
                  <tr key={i}>
                    <AclCell><AclFirst $selected={on}>允许</AclFirst></AclCell>
                    <AclCell><AclInner $selected={on}>{name}</AclInner></AclCell>
                    <AclCell><AclInner $selected={on}>{perm}</AclInner></AclCell>
                    <AclCell><AclInner $selected={on}>C:\</AclInner></AclCell>
                    <AclCell><AclInner $selected={on}>{scope}</AclInner></AclCell>
                  </tr>
                );
              })}
            </tbody>
          </Table>
        </ListBox>
        <EditButton $w={129}>更改权限(C)...</EditButton>
        <InheritLabel><CheckBox type="checkbox" defaultChecked disabled />包括可从该对象的父项继承的权限(I)</InheritLabel>
        <ManageRow><Link href="#manage">管理权限项目</Link></ManageRow>
      </Panel>
      <DialogButtons>
        <PushButton $w={74} $default>确定</PushButton>
        <PushButton $w={74}>取消</PushButton>
        <PushButton $w={74} disabled>应用(A)</PushButton>
      </DialogButtons>
    </Sheet>
  </Window>
);

export default function App() {
  return (
    <Screen lang="zh-CN">
      <GlobalStyle />
      <Gradients />
      <Desktop>
        <Shortcut $y={10}><BigComputer />计算机</Shortcut>
        <Shortcut $y={106}><BigBin />回收站</Shortcut>
        <Explorer />
        <Properties />
        <Security />
      </Desktop>
      <TaskBar>
        <StartButton><WindowsFlag />开始</StartButton>
        <Grip />
        <TaskButton aria-label="服务器管理器"><ServerIcon /></TaskButton>
        <TaskButton aria-label="PowerShell"><ShellIcon /></TaskButton>
        <TaskButton aria-label="资源管理器" $open><ExplorerIcon /></TaskButton>
        <Spacer />
        <LangBar>
          <LangGrip />
          <span>CH</span>
          <Separator />
          <KeyboardIcon />
          <Separator />
          <HelpIcon />
          <Separator />
          <RestoreIcon />
        </LangBar>
        <Tray>
          <TrayIcons>
            <ChevronsIcon />
            <FlagIcon />
            <NetTrayIcon />
            <SpeakerIcon />
          </TrayIcons>
          <Clock>13:00<br />2016/6/23</Clock>
          <PeekIcon />
        </Tray>
      </TaskBar>
      <Watermark>
        <Brand><BrandLatin>Bai</BrandLatin><Paw /><BrandHan>经验</BrandHan></Brand>
        <BrandUrl>jingyan.baidu.com</BrandUrl>
      </Watermark>
    </Screen>
  );
}
